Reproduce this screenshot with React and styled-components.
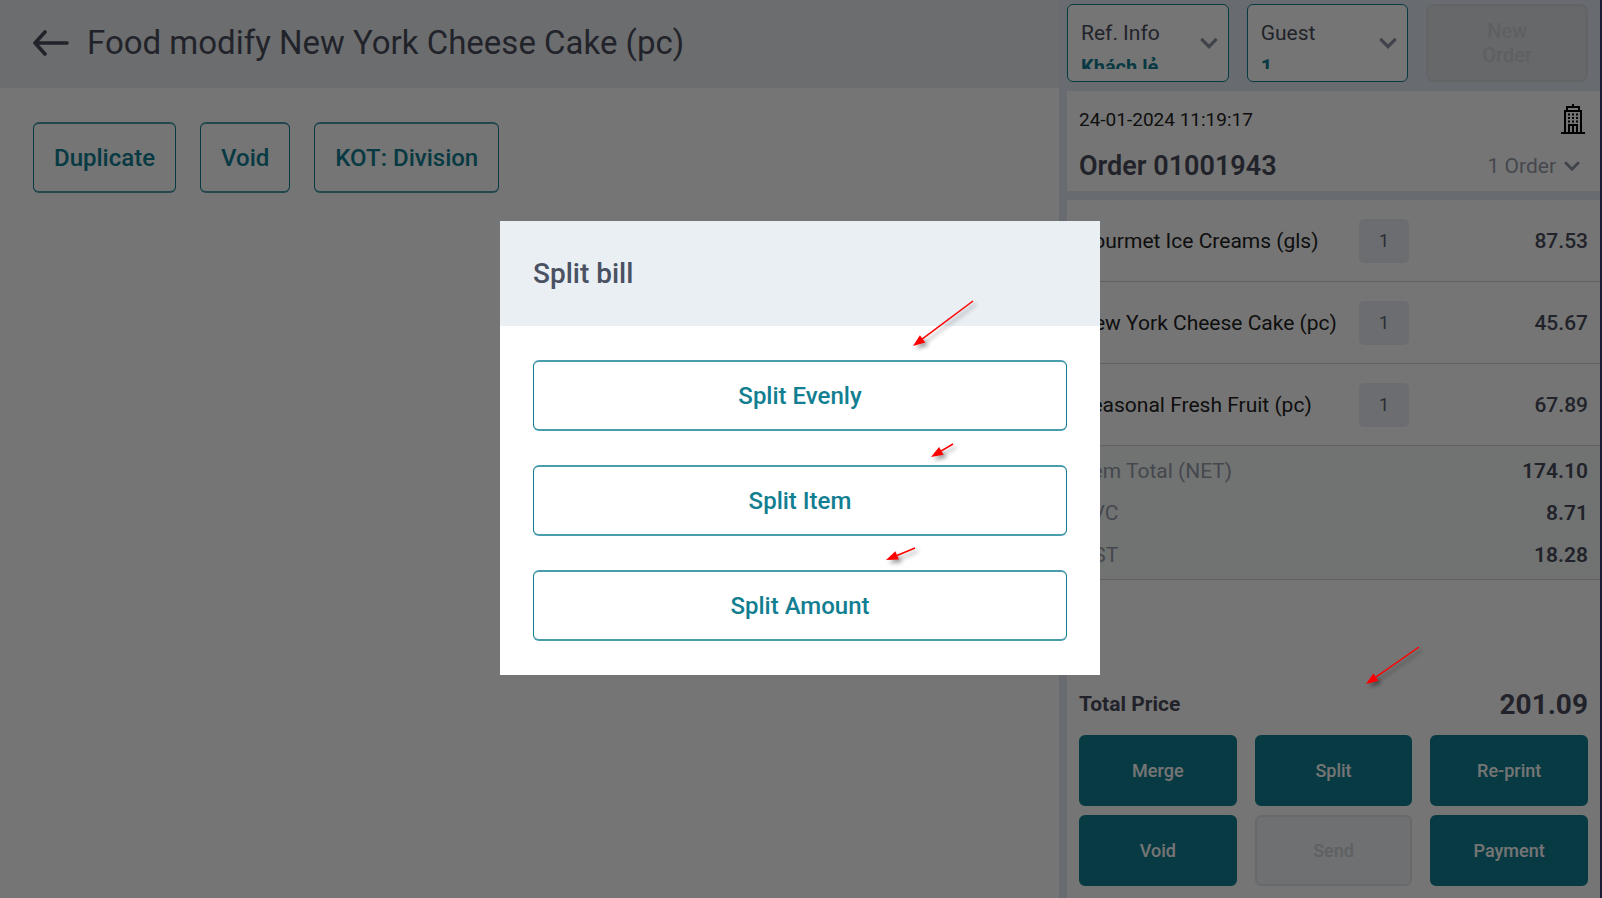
import React from "react";
import styled, { createGlobalStyle } from "styled-components";

const GlobalStyle = createGlobalStyle`
  * {
    box-sizing: border-box;
  }
  body {
    margin: 0;
    font-family: Roboto, "Liberation Sans", sans-serif;
    color: #4a4e5c;
    background: #fff;
  }
  button, select {
    font-family: inherit;
    cursor: pointer;
  }
`;

const Page = styled.div`
  display: grid;
  grid-template-columns: 1059fr 541fr;
  min-height: 100vh;
  border-right: 2px solid #3c3f78;
`;

const Header = styled.header`
  display: flex;
  align-items: center;
  gap: 17px;
  height: 88px;
  padding: 0 32px 2px;
  background: #ebeef2;
`;

const BackButton = styled.button`
  display: flex;
  padding: 0;
  border: none;
  background: none;
  color: inherit;
`;

const PageTitle = styled.h1`
  margin: 0;
  font-size: 33px;
  font-weight: 400;
  line-height: 40px;
`;

const Actions = styled.div`
  display: flex;
  flex-wrap: wrap;
  gap: 24px;
  padding: 34px 33px;
`;

const OutlineButton = styled.button`
  height: 71px;
  padding: 0 20px;
  border: solid;
  border-width: 2px 1px;
  border-color: #4a9daa #117e91;
  border-radius: 6px;
  background: #fff;
  color: #117e91;
  font-size: 24px;
  font-weight: 500;
`;

const Side = styled.aside`
  display: flex;
  flex-direction: column;
  padding-left: 8px;
  background: #e2e9f4;
`;

const TopBar = styled.div`
  display: grid;
  grid-template-columns: repeat(3, 1fr);
  gap: 18px;
  padding: 4px 12px 9px 0;
`;

const PickerBox = styled.label`
  display: flex;
  align-items: center;
  height: 78px;
  padding: 12px 10px 12px 13px;
  border: 1px solid #117e91;
  border-radius: 6px;
  background: #fff;
  color: #4a4e5c;
`;

const PickerText = styled.span`
  flex: 1;
  min-width: 0;
  height: 100%;
  overflow: hidden;
  font-size: 21px;
  line-height: 32px;
`;

const PickerSelect = styled.select`
  display: block;
  width: 100%;
  height: 36px;
  padding: 0;
  border: none;
  appearance: none;
  background: none;
  color: #117e91;
  font-size: 20px;
  font-weight: 700;
`;

const NewOrderButton = styled.button`
  padding: 0 40px;
  border: 2px solid #d6dade;
  border-radius: 8px;
  background: #e0e3e6;
  color: #cdd2d8;
  font-size: 20px;
  font-weight: 500;
  line-height: 24px;
`;

const OrderHead = styled.section`
  display: flex;
  flex-direction: column;
  justify-content: space-between;
  height: 100px;
  margin-bottom: 9px;
  padding: 13px 15px 11px 12px;
  background: #fff;
`;

const HeadRow = styled.div`
  display: flex;
  justify-content: space-between;
  align-items: center;
`;

const OrderDate = styled.time`
  color: #222;
  font-size: 19px;
`;

const OrderTitle = styled.h2`
  margin: 0;
  font-size: 27px;
  font-weight: 600;
  line-height: 28px;
`;

const OrderCount = styled.button`
  display: flex;
  align-items: center;
  gap: 8px;
  padding: 0 5px 0 0;
  border: none;
  background: none;
  color: #979daa;
  font-size: 21px;
`;

const OrderBody = styled.section`
  display: flex;
  flex: 1;
  flex-direction: column;
  background: #fff;
`;

const ItemTable = styled.table`
  width: 100%;
  table-layout: fixed;
  border-spacing: 0;
`;

const ItemCell = styled.td`
  height: 82px;
  padding: 0;
  border-bottom: 1px solid #d3d3d3;
`;

const NameCell = styled(ItemCell)`
  width: 292px;
  padding-left: 12px;
  color: #222;
  font-size: 21px;
  white-space: nowrap;
`;

const QtyCell = styled(ItemCell)`
  width: 50px;
`;

const Qty = styled.button`
  display: block;
  width: 50px;
  height: 44px;
  padding: 0;
  border: none;
  border-radius: 5px;
  background: #eaeef3;
  color: #5d6272;
  font-size: 18px;
`;

const PriceCell = styled(ItemCell)`
  padding-right: 12px;
  font-size: 21px;
  font-weight: 500;
  text-align: right;
`;

const Totals = styled.dl`
  margin: 0;
  padding: 4px 12px 3px;
  border-bottom: 1px solid #d3d3d3;
  background: #f5faf8;
`;

const TotalRow = styled.div`
  display: flex;
  justify-content: space-between;
  font-size: 21px;
  line-height: 42px;

  dt {
    color: #979daa;
  }
  dd {
    margin: 0;
    font-weight: 600;
  }
`;

const Footer = styled.footer`
  margin-top: auto;
  padding: 12px;
`;

const GrandTotal = styled.div`
  display: flex;
  justify-content: space-between;
  align-items: center;
  height: 32px;
  margin-bottom: 15px;
  font-size: 21px;
  font-weight: 700;
`;

const GrandPrice = styled.span`
  font-size: 28px;
`;

const ButtonGrid = styled.div`
  display: grid;
  grid-template-columns: repeat(3, 1fr);
  gap: 9px 18px;
`;

const SolidButton = styled.button`
  height: 71px;
  border: 2px solid #117e91;
  border-radius: 6px;
  background: #117e91;
  color: #fff;
  font-size: 18px;
  font-weight: 500;

  &:disabled {
    border-color: #e2e5ea;
    background: #f2f4f7;
    color: #cdd2d8;
  }
`;

const Backdrop = styled.div`
  position: fixed;
  inset: 0;
  display: flex;
  align-items: center;
  justify-content: center;
  padding: 0 2px 2px 0;
  background: rgba(0, 0, 0, 0.54);
`;

const Dialog = styled.div`
  width: 600px;
  max-width: 100%;
  background: #fff;
`;

const DialogTitle = styled.h2`
  margin: 0;
  padding: 0 33px;
  background: #eaeff4;
  color: #495162;
  font-size: 28px;
  font-weight: 500;
  line-height: 105px;
`;

const DialogBody = styled.div`
  display: flex;
  flex-direction: column;
  gap: 34px;
  padding: 34px 33px;
`;

const Pointers = styled.svg`
  position: fixed;
  top: 0;
  left: 0;
  pointer-events: none;
  filter: drop-shadow(3px 3px 2px rgba(0, 0, 0, 0.4));
`;

const items = [
  { name: "Gourmet Ice Creams (gls)", qty: 1, price: "87.53" },
  { name: "New York Cheese Cake (pc)", qty: 1, price: "45.67" },
  { name: "Seasonal Fresh Fruit (pc)", qty: 1, price: "67.89" },
];

const totals = [
  { label: "Item Total (NET)", value: "174.10" },
  { label: "SVC", value: "8.71" },
  { label: "GST", value: "18.28" },
];

const orderActions = ["Merge", "Split", "Re-print", "Void", "Send", "Payment"];

const pointers = [
  { from: [973, 301], to: [913, 346] },
  { from: [953, 444], to: [931, 457] },
  { from: [915, 548], to: [886, 560] },
  { from: [1419, 647], to: [1366, 684] },
];

function Chevron({ width = 18 }) {
  return (
    <svg width={width} height="12" viewBox="0 0 18 12" aria-hidden="true">
      <path d="M1.3 1.8 9 9.6l7.7-7.8" fill="none" stroke="#8d939f" strokeWidth="3.2" />
    </svg>
  );
}

function BuildingIcon() {
  return (
    <svg width="24" height="30" viewBox="0 0 24 30" fill="none" stroke="#000" aria-hidden="true">
      <path d="M0 29h24M4 29V7h16v22M6 7V3h12v4M12 3V0M8 29v-8h8v8M12 21v8" strokeWidth="2" />
      <path d="M7 10.500h10M7 14h10M7 17.500h10" strokeWidth="2" strokeDasharray="2 2" />
    </svg>
  );
}

function Picker({ label, value }) {
  return (
    <PickerBox>
      <PickerText>
        {label}
        <PickerSelect defaultValue={value}>
          <option>{value}</option>
        </PickerSelect>
      </PickerText>
      <Chevron />
    </PickerBox>
  );
}

function Pointer({ from, to }) {
  const angle = (Math.atan2(to[1] - from[1], to[0] - from[0]) * 180) / Math.PI;
  const length = Math.hypot(to[0] - from[0], to[1] - from[1]);
  return (
    <g transform={`translate(${to[0]} ${to[1]}) rotate(${angle})`}>
      <path d={`M${-length} 0H-8`} stroke="#f00" strokeWidth="1.5" />
      <path d="M0 0-12-4.500v9z" fill="#f00" />
    </g>
  );
}

export default function App() {
  return (
    <>
      <GlobalStyle />
      <Page>
        <main>
          <Header>
            <BackButton aria-label="Back">
              <svg width="38" height="26" viewBox="0 0 38 26" fill="none" stroke="currentColor" strokeWidth="3.6" strokeLinecap="round" strokeLinejoin="round">
                <path d="M35 13H3M13 2 3 13l10 11" />
              </svg>
            </BackButton>
            <PageTitle>Food modify New York Cheese Cake (pc)</PageTitle>
          </Header>
          <Actions>
            <OutlineButton>Duplicate</OutlineButton>
            <OutlineButton>Void</OutlineButton>
            <OutlineButton>KOT: Division</OutlineButton>
          </Actions>
        </main>

        <Side>
          <TopBar>
            <Picker label="Ref. Info" value="Khách lẻ" />
            <Picker label="Guest" value="1" />
            <NewOrderButton disabled>New Order</NewOrderButton>
          </TopBar>

          <OrderHead>
            <HeadRow>
              <OrderDate>24-01-2024 11:19:17</OrderDate>
              <BuildingIcon />
            </HeadRow>
            <HeadRow>
              <OrderTitle>Order 01001943</OrderTitle>
              <OrderCount>
                1 Order
                <Chevron width={16} />
              </OrderCount>
            </HeadRow>
          </OrderHead>

          <OrderBody>
            <ItemTable>
              <tbody>
                {items.map((item) => (
                  <tr key={item.name}>
                    <NameCell>{item.name}</NameCell>
                    <QtyCell>
                      <Qty>{item.qty}</Qty>
                    </QtyCell>
                    <PriceCell>{item.price}</PriceCell>
                  </tr>
                ))}
              </tbody>
            </ItemTable>
            <Totals>
              {totals.map((row) => (
                <TotalRow key={row.label}>
                  <dt>{row.label}</dt>
                  <dd>{row.value}</dd>
                </TotalRow>
              ))}
            </Totals>
            <Footer>
              <GrandTotal>
                Total Price
                <GrandPrice>201.09</GrandPrice>
              </GrandTotal>
              <ButtonGrid>
                {orderActions.map((name) => (
                  <SolidButton key={name} disabled={name === "Send"}>
                    {name}
                  </SolidButton>
                ))}
              </ButtonGrid>
            </Footer>
          </OrderBody>
        </Side>
      </Page>

      <Backdrop>
        <Dialog role="dialog" aria-modal="true" aria-labelledby="split-title">
          <DialogTitle id="split-title">Split bill</DialogTitle>
          <DialogBody>
            <OutlineButton>Split Evenly</OutlineButton>
            <OutlineButton>Split Item</OutlineButton>
            <OutlineButton>Split Amount</OutlineButton>
          </DialogBody>
        </Dialog>
      </Backdrop>

      <Pointers width="100%" height="100%" aria-hidden="true">
        {pointers.map((pointer) => (
          <Pointer key={pointer.to.join()} {...pointer} />
        ))}
      </Pointers>
    </>
  );
}
